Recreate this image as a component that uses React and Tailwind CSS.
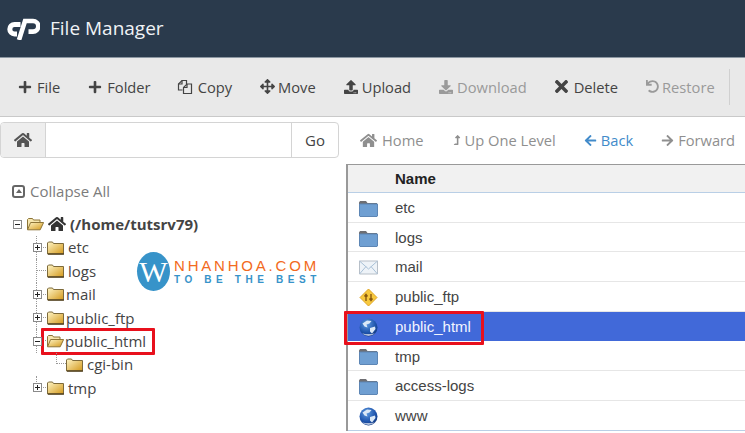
import { FaPlus, FaArrowsAlt, FaUpload, FaDownload, FaTimes, FaUndo, FaHome, FaLevelUpAlt, FaArrowLeft, FaArrowRight } from "react-icons/fa";

function CopyIcon({ className }) {
  return (
    <svg width="16" height="16" viewBox="0 0 16 16" fill="none" stroke="#444" strokeWidth="1.200" className={className}>
      <path d="M5.500 11H1.500V5L5 1.500h4.500V5" />
      <path d="M5 1.500V5H1.500" />
      <path d="M6.500 14.500V8.500L10 5h4.500v9.500z" fill="#e9e9e9" />
      <path d="M10 5v3.500H6.500" />
    </svg>
  );
}

const toolbar = [
  { icon: FaPlus, label: "File" },
  { icon: FaPlus, label: "Folder" },
  { icon: CopyIcon, label: "Copy", iconClass: "-ml-[2px]" },
  { icon: FaArrowsAlt, label: "Move", size: 15, gap: "gap-[3px]" },
  { icon: FaUpload, label: "Upload", gap: "gap-[4px]" },
  { icon: FaDownload, label: "Download", off: true, gap: "gap-[4px]" },
  { icon: FaTimes, label: "Delete", size: 19, gap: "gap-[3px]", iconClass: "-ml-[3px]" },
  { icon: FaUndo, label: "Restore", off: true, size: 13, gap: "gap-[3px]" },
];

const nav = [
  { icon: FaHome, label: "Home", className: "text-[#8f8f8f]", size: 17, gap: "gap-[5px]" },
  { icon: FaLevelUpAlt, label: "Up One Level", className: "text-[#8f8f8f]", size: 10, gap: "gap-[3px]" },
  { icon: FaArrowLeft, label: "Back", className: "text-[#428bca]", size: 13 },
  { icon: FaArrowRight, label: "Forward", className: "text-[#8f8f8f]", size: 13 },
];

const files = [
  { name: "etc", icon: "folder" },
  { name: "logs", icon: "folder" },
  { name: "mail", icon: "mail" },
  { name: "public_ftp", icon: "ftp" },
  { name: "public_html", icon: "globe", selected: true },
  { name: "tmp", icon: "folder" },
  { name: "access-logs", icon: "folder" },
  { name: "www", icon: "globe" },
];

function CpanelLogo() {
  return (
    <svg width="33" height="22" viewBox="0 0 33 22" fill="none">
      <path d="M13.500 6.500H7.500a4.700 4.700 0 0 0 0 9.400H10" stroke="#fff" strokeWidth="5" />
      <path d="M12 22 18 3h8a5 5 0 0 1 0 10.600H21.500" stroke="#fff" strokeWidth="4.600" />
    </svg>
  );
}

function TreeFolder({ open }) {
  return (
    <svg width="17" height="14" viewBox="0 0 17 14" className="shrink-0">
      <defs>
        <linearGradient id="fold" x1="0" y1="0" x2="1" y2="1">
          <stop offset="0" stopColor="#fff6c8" />
          <stop offset="1" stopColor="#d3981a" />
        </linearGradient>
      </defs>
      {open ? (
        <>
          <path d="M.5 12.500V2.500l1-1h4l1 1.500h6.500v2.500" fill="#f6e6ae" stroke="#8d7437" />
          <path d="M.5 12.800 3.600 5.500h13l-3.400 7.300z" fill="url(#fold)" stroke="#8d7437" />
        </>
      ) : (
        <>
          <path d="M.5 13V2l1-1h4l1 1.500h10V13z" fill="url(#fold)" stroke="#7d6a3a" />
          <path d="M1 13h16" stroke="#4f4020" strokeWidth="1.400" />
        </>
      )}
    </svg>
  );
}

function Toggle({ open }) {
  return (
    <span className="relative z-10 flex h-[9px] w-[9px] shrink-0 items-center justify-center border border-[#8a8a8a] bg-white">
      <span className="absolute h-px w-[5px] bg-[#222]" />
      {!open && <span className="absolute h-[5px] w-px bg-[#222]" />}
    </span>
  );
}

function TreeRow({ name, toggle, open, depth = 1, last, textGap = "ml-[4px]", children }) {
  return (
    <div className="relative flex h-[23.400px] items-center text-[#444]">
      {depth === 1 && (
        <span className={`absolute left-[36px] top-0 border-l border-dotted border-[#999] ${last ? "h-[12px]" : "h-full"}`} />
      )}
      {depth === 1 && <span className="absolute left-[36px] top-[11px] w-[10px] border-t border-dotted border-[#999]" />}
      <span className={`flex w-[47px] justify-end pr-[5px] ${depth === 2 ? "invisible" : ""}`}>{toggle && <Toggle open={open} />}</span>
      {depth === 2 && <span className="absolute left-[56px] top-0 h-[11px] w-[10px] border-b border-l border-dotted border-[#999]" />}
      {depth === 2 && <span className="w-[19px]" />}
      <TreeFolder open={open} />
      <span className={textGap}>{name}</span>
      {children}
    </div>
  );
}

function FolderIcon() {
  return (
    <svg width="19" height="17" viewBox="0 0 19 17">
      <path d="M0 2.500 1 1h6l1.500 2H18v3H0z" fill="#6e6e72" />
      <path d="M.5 4h18v12l-.5.5H1l-.5-.5z" fill="#6f9fd2" stroke="#5d86b5" />
    </svg>
  );
}

function MailIcon() {
  return (
    <svg width="19" height="17" viewBox="0 0 19 17">
      <path d="M.5 2h18v13H.5z" fill="#eef3f8" stroke="#b7bfc8" />
      <path d="M.5 2 9.500 10l9-8M.5 15 7 7.500M18.500 15 12 7.500" fill="none" stroke="#a9c0d6" />
    </svg>
  );
}

function FtpIcon() {
  return (
    <svg width="19" height="19" viewBox="0 0 19 19">
      <path d="M9.500 1 18 9.500 9.500 18 1 9.500z" fill="#f7c93e" stroke="#e0a526" />
      <path d="M7 13V7M5.500 8.500 7 6.500l1.500 2M12 6v6M10.500 10.500 12 12.500l1.500-2" fill="none" stroke="#8a5a10" strokeWidth="1.400" />
    </svg>
  );
}

function GlobeIcon() {
  return (
    <svg width="19" height="19" viewBox="0 0 19 19">
      <defs>
        <radialGradient id="globe" cx="0.4" cy="0.3" r="0.8">
          <stop offset="0" stopColor="#5f9be0" />
          <stop offset="0.6" stopColor="#1f55ad" />
          <stop offset="1" stopColor="#0f2f70" />
        </radialGradient>
      </defs>
      <circle cx="9.500" cy="9.500" r="9" fill="url(#globe)" />
      <path d="M3.500 5.500 8 2.500l4.500.5-2 2.500-3 1 1 3-3-1zM11 10l5-1.500.5 2.500-3.500 4.500-2-2z" fill="#dbe9f7" />
      <path d="M3 15.200a9 9 0 0 0 13 0l-3 .8H6z" fill="#e9eef6" opacity="0.7" />
    </svg>
  );
}

const fileIcons = { folder: FolderIcon, mail: MailIcon, ftp: FtpIcon, globe: GlobeIcon };

function RedBox({ className }) {
  return <span className={`pointer-events-none absolute rounded-[1px] border-[3px] border-[#e8101c] ${className}`} />;
}

export default function App() {
  return (
    <div className="h-[433px] w-[745px] overflow-hidden bg-white font-['Open_Sans',sans-serif] text-[15px] text-[#444]">
      <header className="flex h-[57px] items-center gap-[10px] bg-[#2a3a4c] pl-[7px] text-white">
        <CpanelLogo />
        <span className="text-[19px] text-[#f0f3f6]">File Manager</span>
      </header>

      <div className="flex h-[60px] items-center gap-[28px] whitespace-nowrap border-y border-b-[#c9c9c9] border-t-[#8c97a2] bg-[#e9e9e9] pl-[18px] text-[14.700px]">
        {toolbar.map(({ icon: Icon, label, off, size = 14, gap = "gap-[5px]", iconClass }) => (
          <span key={label} className={`flex items-center ${gap} ${off ? "text-[#9a9a9a]" : "text-[#444]"}`}>
            <Icon size={size} className={iconClass} />
            {label}
          </span>
        ))}
        <span className="ml-[-14px] h-[36px] w-px bg-[#d0d0d0]" />
      </div>

      <div className="flex">
        <aside className="w-[346px] shrink-0">
          <div className="mt-[5px] flex h-[36px] w-[339px] overflow-hidden rounded-[4px] border border-[#d4d4d4]">
            <span className="flex w-[45px] items-center justify-center border-r border-[#d4d4d4] bg-[#eee] text-[#555]">
              <FaHome size={18} />
            </span>
            <span className="flex-1 bg-white" />
            <span className="flex w-[47px] items-center justify-center border-l border-[#d4d4d4]">Go</span>
          </div>

          <div className="mt-[22px] flex items-center gap-[5px] pl-[12px] text-[#7c7c7c]">
            <span className="flex h-[13px] w-[13px] items-center justify-center rounded-[3px] border-2 border-[#666]">
              <span className="h-0 w-0 border-x-[3px] border-b-[4px] border-x-transparent border-b-[#666]" />
            </span>
            Collapse All
          </div>

          <div className="relative mt-[10px]">
            <div className="flex h-[23.400px] items-center pl-[13px] font-bold">
              <Toggle open />
              <span className="ml-[5px]"><TreeFolder open /></span>
              <span className="ml-[4px] text-[#333]"><FaHome size={18} /></span>
              <span className="ml-[4px]">(/home/tutsrv79)</span>
            </div>
            <TreeRow name="etc" toggle />
            <TreeRow name="logs" />
            <TreeRow name="mail" toggle textGap="ml-[2px]" />
            <TreeRow name="public_ftp" toggle textGap="ml-[2px]" />
            <TreeRow name="public_html" toggle open textGap="ml-[1px]">
              <RedBox className="left-[41px] top-[-1px] h-[27px] w-[114px]" />
            </TreeRow>
            <TreeRow name="cgi-bin" depth={2} />
            <TreeRow name="tmp" toggle last />

            <div className="absolute left-[137px] top-[39px] flex items-center">
              <span className="flex h-[39px] w-[33px] items-center justify-center rounded-[50%] bg-[#3793c9] font-['Liberation_Serif',serif] text-[30px] text-white">W</span>
              <div className="ml-[4px] font-['Liberation_Sans',sans-serif] leading-none whitespace-nowrap">
                <div className="text-[15px] tracking-[2.800px] text-[#f26a21]">NHANHOA.COM</div>
                <div className="mt-[2px] text-[10px] font-bold tracking-[4.600px] text-[#3793c9]">TO BE THE BEST</div>
              </div>
            </div>
          </div>
        </aside>

        <main className="min-w-0 flex-1">
          <div className="flex h-[47px] items-center gap-[28px] whitespace-nowrap pl-[14px] text-[14.700px]">
            {nav.map(({ icon: Icon, label, className, size, gap = "gap-[4px]" }) => (
              <span key={label} className={`flex items-center ${gap} ${className}`}>
                <Icon size={size} />
                {label}
              </span>
            ))}
          </div>
          <div className="border-l-2 border-l-[#999] font-['Liberation_Sans',sans-serif]">
            <div className="flex h-[29px] items-center border-y border-t-[#999] border-b-[#b9cfe6] bg-[#f1f1f1] pl-[47px] pt-[2px] font-bold text-[#222]">Name</div>
            {files.map(({ name, icon, selected }) => {
              const Icon = fileIcons[icon];
              return (
                <div key={name} className={`relative flex h-[29.700px] items-center border-b pt-[2px] ${selected ? "border-[#4169d9] bg-[#4169d9] text-[#f2f5ff]" : name === "www" ? "border-[#b9cfe6] text-[#444]" : "border-[#e6e6e6] text-[#444]"}`}>
                  <span className="flex w-[47px] shrink-0 justify-center pr-[7px]"><Icon /></span>
                  {name}
                  {selected && <RedBox className="left-[-4px] top-[-1px] h-[34px] w-[140px]" />}
                </div>
              );
            })}
          </div>
        </main>
      </div>
    </div>
  );
}
